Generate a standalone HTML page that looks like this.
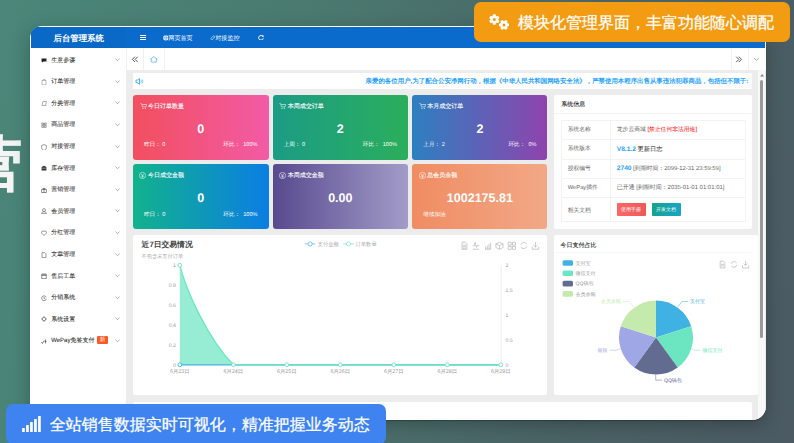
<!DOCTYPE html>
<html><head><meta charset="utf-8">
<style>
*{box-sizing:border-box;margin:0;padding:0}
html,body{width:794px;height:443px;overflow:hidden}
body{position:relative;font-family:"Liberation Sans",sans-serif;text-rendering:geometricPrecision;background:linear-gradient(100deg,#4a8679 0%,#4a7a70 35%,#4a6466 70%,#4b5a63 100%)}
.a{position:absolute}
.t{position:absolute;white-space:nowrap;line-height:1}
#bigc{left:-36.7px;top:135.8px;font-size:58.7px;font-weight:bold;color:#f4f4f4;line-height:1;-webkit-text-stroke:0.7px #f4f4f4}
#win{left:30px;top:26px;width:736px;height:394px;border-radius:12px 12px 14px 12px;background:#fff;overflow:hidden;box-shadow:0 1px 1px rgba(0,0,0,0.25),0 5px 18px rgba(0,0,0,0.26)}
/* all inside win use page coords via wrapper offset */
#pg{left:-30px;top:-26px;width:794px;height:443px}
#hdr{left:31px;top:27px;width:734px;height:21px;background:#0b6bcc}
#hdrl{left:31px;top:27px;width:95px;height:21px;background:#0a68c7}
#side{left:30px;top:48px;width:96.4px;height:372px;background:#fff;box-shadow:1px 0 1px rgba(0,0,0,0.04)}
.mi{position:absolute;left:0;width:96px;height:12px}
.mi .ic{position:absolute;left:10px;top:3px;width:6px;height:6px}
.mi .tx{position:absolute;left:21px;top:2px;font-size:6px;line-height:8px;color:#333;white-space:nowrap}
.mi .cv{position:absolute;left:85px;top:3px;width:4px;height:4px;border-right:0.7px solid #666;border-bottom:0.7px solid #666;transform:rotate(45deg)}
#tabs{left:126px;top:48px;width:640px;height:22px;background:#fff}
#content{left:126px;top:70px;width:640px;height:350px;background:#ececec}
#sbar{left:757.8px;top:70px;width:7px;height:350px;background:#f8f8f8}
#thumb{left:759.9px;top:79.9px;width:3.3px;height:258.4px;background:#9a9a9a;border-radius:1.5px}
.pnl{position:absolute;background:#fff;border-radius:2px}
.card{position:absolute;border-radius:3px;color:#fff}
.card .ttl{position:absolute;left:15px;top:9.2px;font-size:6px;line-height:7px;white-space:nowrap;-webkit-text-stroke:0.1px #fff}
.card .ci{position:absolute;left:7px;top:8px;width:7px;height:7px}
.card .num{position:absolute;left:0;width:100%;text-align:center;top:28px;font-size:12.5px;font-weight:bold;line-height:12px}
.card .fl{position:absolute;left:11px;top:47.7px;font-size:5.6px;line-height:7px;white-space:nowrap}
.card .fr{position:absolute;right:11px;top:47.7px;font-size:5.6px;line-height:7px;white-space:nowrap}
</style></head><body>
<div id="bigc" class="a">营</div>
<div id="win" class="a">
<div id="pg" class="a">
  <div id="hdr" class="a"></div>
  <div id="hdrl" class="a"></div>
  <div class="t" style="left:53.5px;top:33.9px;font-size:8.4px;font-weight:bold;color:#fff">后台管理系统</div>
  <!-- menu icon -->
  <div class="a" style="left:140px;top:35.3px;width:5.6px;height:1px;background:#fff"></div>
  <div class="a" style="left:140px;top:37.3px;width:5.6px;height:1px;background:#fff"></div>
  <div class="a" style="left:140px;top:39.3px;width:5.6px;height:1px;background:#fff"></div>
  <svg class="a" style="left:162.6px;top:35.1px" width="5.6" height="5.6" viewBox="0 0 6 6"><circle cx="3" cy="3" r="2.8" fill="#fff"/><path d="M0.4 3h5.2 M3 0.3c-1.4 1.5-1.4 3.9 0 5.4 M3 0.3c1.4 1.5 1.4 3.9 0 5.4" stroke="#0b68c9" stroke-width="0.45" fill="none"/></svg>
  <div class="t" style="left:168.3px;top:35.5px;font-size:6.1px;color:#fff">网页首页</div>
  <svg class="a" style="left:209.6px;top:35.1px" width="5.6" height="5.6" viewBox="0 0 6 6"><path d="M2.6 3.6l1.2-1.2 M2.2 2.2l0.9-0.9a1.1 1.1 0 0 1 1.6 1.6l-0.9 0.9 M3.8 3.8l-0.9 0.9a1.1 1.1 0 0 1-1.6-1.6l0.9-0.9" stroke="#fff" stroke-width="0.55" fill="none"/></svg>
  <div class="t" style="left:215.2px;top:35.5px;font-size:6.1px;color:#fff">对接监控</div>
  <svg class="a" style="left:257.6px;top:34.9px" width="6" height="5.6" viewBox="0 0 6 5.6"><path d="M4.9 1.6A2.3 2.3 0 1 0 5.2 3.3" fill="none" stroke="#fff" stroke-width="1"/><path d="M3.6 0.6L5.6 0.3L5.4 2.5Z" fill="#fff"/></svg>

  <div id="side" class="a"></div>
<svg class="a" style="left:40.5px;top:57.1px" width="6" height="6" viewBox="0 0 6 6"><path d="M0.5 1.5h5v3h-3l-1.5 1v-1h-0.5z" fill="#222"/></svg>
<div class="t" style="left:51.2px;top:57.5px;font-size:6px;color:#2a2a2a;-webkit-text-stroke:0.06px #2a2a2a">生意参谋</div>
<svg class="a" style="left:114.9px;top:58.1px" width="5" height="3.5" viewBox="0 0 5 3.5"><path d="M0.4 0.6L2.5 2.7L4.6 0.6" fill="none" stroke="#777" stroke-width="0.6"/></svg>
<svg class="a" style="left:40.5px;top:78.7px" width="6" height="6" viewBox="0 0 6 6"><path d="M1 1.5h4v4.5h-4z M2 0.5h2v1" fill="none" stroke="#777" stroke-width="0.5"/></svg>
<div class="t" style="left:51.2px;top:79.1px;font-size:6px;color:#2a2a2a;-webkit-text-stroke:0.06px #2a2a2a">订单管理</div>
<svg class="a" style="left:114.9px;top:79.7px" width="5" height="3.5" viewBox="0 0 5 3.5"><path d="M0.4 0.6L2.5 2.7L4.6 0.6" fill="none" stroke="#777" stroke-width="0.6"/></svg>
<svg class="a" style="left:40.5px;top:100.3px" width="6" height="6" viewBox="0 0 6 6"><path d="M0.5 5.5h5 M1 5l1-3.5h3.5l-1 3.5" fill="none" stroke="#777" stroke-width="0.6"/></svg>
<div class="t" style="left:51.2px;top:100.7px;font-size:6px;color:#2a2a2a;-webkit-text-stroke:0.06px #2a2a2a">分类管理</div>
<svg class="a" style="left:114.9px;top:101.3px" width="5" height="3.5" viewBox="0 0 5 3.5"><path d="M0.4 0.6L2.5 2.7L4.6 0.6" fill="none" stroke="#777" stroke-width="0.6"/></svg>
<svg class="a" style="left:40.5px;top:121.9px" width="6" height="6" viewBox="0 0 6 6"><path d="M0.8 1h1.8v1.8h-1.8z M3.4 1h1.8v1.8h-1.8z M0.8 3.6h1.8v1.8h-1.8z M3.4 3.6h1.8v1.8h-1.8z" fill="none" stroke="#555" stroke-width="0.55"/></svg>
<div class="t" style="left:51.2px;top:122.3px;font-size:6px;color:#2a2a2a;-webkit-text-stroke:0.06px #2a2a2a">商品管理</div>
<svg class="a" style="left:114.9px;top:122.9px" width="5" height="3.5" viewBox="0 0 5 3.5"><path d="M0.4 0.6L2.5 2.7L4.6 0.6" fill="none" stroke="#777" stroke-width="0.6"/></svg>
<svg class="a" style="left:40.5px;top:143.5px" width="6" height="6" viewBox="0 0 6 6"><path d="M3 0.6l2.4 0.9v2c0 1.6-1.2 2.4-2.4 2.9c-1.2-0.5-2.4-1.3-2.4-2.9v-2z" fill="none" stroke="#555" stroke-width="0.6"/></svg>
<div class="t" style="left:51.2px;top:143.9px;font-size:6px;color:#2a2a2a;-webkit-text-stroke:0.06px #2a2a2a">对接管理</div>
<svg class="a" style="left:114.9px;top:144.5px" width="5" height="3.5" viewBox="0 0 5 3.5"><path d="M0.4 0.6L2.5 2.7L4.6 0.6" fill="none" stroke="#777" stroke-width="0.6"/></svg>
<svg class="a" style="left:40.5px;top:165.1px" width="6" height="6" viewBox="0 0 6 6"><path d="M0.6 2l2.4-1.3l2.4 1.3v3.4h-4.8z" fill="#333"/><path d="M1.2 3.2h3.6" stroke="#fff" stroke-width="0.5"/></svg>
<div class="t" style="left:51.2px;top:165.5px;font-size:6px;color:#2a2a2a;-webkit-text-stroke:0.06px #2a2a2a">库存管理</div>
<svg class="a" style="left:114.9px;top:166.1px" width="5" height="3.5" viewBox="0 0 5 3.5"><path d="M0.4 0.6L2.5 2.7L4.6 0.6" fill="none" stroke="#777" stroke-width="0.6"/></svg>
<svg class="a" style="left:40.5px;top:186.7px" width="6" height="6" viewBox="0 0 6 6"><path d="M0.6 2.5h4.8v3h-4.8z M3 1v4.5 M1.5 1.5c0.8-1 1.5 0 1.5 1 M4.5 1.5c-0.8-1-1.5 0-1.5 1" fill="none" stroke="#444" stroke-width="0.6"/></svg>
<div class="t" style="left:51.2px;top:187.1px;font-size:6px;color:#2a2a2a;-webkit-text-stroke:0.06px #2a2a2a">营销管理</div>
<svg class="a" style="left:114.9px;top:187.7px" width="5" height="3.5" viewBox="0 0 5 3.5"><path d="M0.4 0.6L2.5 2.7L4.6 0.6" fill="none" stroke="#777" stroke-width="0.6"/></svg>
<svg class="a" style="left:40.5px;top:208.3px" width="6" height="6" viewBox="0 0 6 6"><path d="M3 0.6a1.5 1.5 0 1 1 0 3a1.5 1.5 0 1 1 0-3 M0.6 5.6c0.3-1.3 1.2-2 2.4-2s2.1 0.7 2.4 2z" fill="none" stroke="#555" stroke-width="0.6"/></svg>
<div class="t" style="left:51.2px;top:208.7px;font-size:6px;color:#2a2a2a;-webkit-text-stroke:0.06px #2a2a2a">会员管理</div>
<svg class="a" style="left:114.9px;top:209.3px" width="5" height="3.5" viewBox="0 0 5 3.5"><path d="M0.4 0.6L2.5 2.7L4.6 0.6" fill="none" stroke="#777" stroke-width="0.6"/></svg>
<svg class="a" style="left:40.5px;top:229.9px" width="6" height="6" viewBox="0 0 6 6"><path d="M3 5.5l-2.3-2.3a1.3 1.3 0 0 1 2.3-1.6a1.3 1.3 0 0 1 2.3 1.6z" fill="none" stroke="#555" stroke-width="0.6"/></svg>
<div class="t" style="left:51.2px;top:230.3px;font-size:6px;color:#2a2a2a;-webkit-text-stroke:0.06px #2a2a2a">分红管理</div>
<svg class="a" style="left:114.9px;top:230.9px" width="5" height="3.5" viewBox="0 0 5 3.5"><path d="M0.4 0.6L2.5 2.7L4.6 0.6" fill="none" stroke="#777" stroke-width="0.6"/></svg>
<svg class="a" style="left:40.5px;top:251.5px" width="6" height="6" viewBox="0 0 6 6"><path d="M1 0.6h2.8l1.2 1.2v3.8h-4z" fill="none" stroke="#555" stroke-width="0.6"/></svg>
<div class="t" style="left:51.2px;top:251.9px;font-size:6px;color:#2a2a2a;-webkit-text-stroke:0.06px #2a2a2a">文章管理</div>
<svg class="a" style="left:114.9px;top:252.5px" width="5" height="3.5" viewBox="0 0 5 3.5"><path d="M0.4 0.6L2.5 2.7L4.6 0.6" fill="none" stroke="#777" stroke-width="0.6"/></svg>
<svg class="a" style="left:40.5px;top:273.1px" width="6" height="6" viewBox="0 0 6 6"><path d="M0.7 1.2h4.6v4.4h-4.6z M0.7 2.5h4.6 M2 0.5v1.4 M4 0.5v1.4" fill="none" stroke="#444" stroke-width="0.6"/></svg>
<div class="t" style="left:51.2px;top:273.5px;font-size:6px;color:#2a2a2a;-webkit-text-stroke:0.06px #2a2a2a">售后工单</div>
<svg class="a" style="left:114.9px;top:274.1px" width="5" height="3.5" viewBox="0 0 5 3.5"><path d="M0.4 0.6L2.5 2.7L4.6 0.6" fill="none" stroke="#777" stroke-width="0.6"/></svg>
<svg class="a" style="left:40.5px;top:294.7px" width="6" height="6" viewBox="0 0 6 6"><path d="M5.2 2.2a2.4 2.4 0 1 0 0.2 1.6 M3 2v1.4h1.2" fill="none" stroke="#444" stroke-width="0.6"/></svg>
<div class="t" style="left:51.2px;top:295.1px;font-size:6px;color:#2a2a2a;-webkit-text-stroke:0.06px #2a2a2a">分销系统</div>
<svg class="a" style="left:114.9px;top:295.7px" width="5" height="3.5" viewBox="0 0 5 3.5"><path d="M0.4 0.6L2.5 2.7L4.6 0.6" fill="none" stroke="#777" stroke-width="0.6"/></svg>
<svg class="a" style="left:40.5px;top:316.3px" width="6" height="6" viewBox="0 0 6 6"><path d="M3 1.2a1.8 1.8 0 1 1 0 3.6a1.8 1.8 0 1 1 0-3.6z M3 0.3v1 M3 4.8v1 M0.3 3h1 M4.8 3h1" fill="none" stroke="#444" stroke-width="0.6"/></svg>
<div class="t" style="left:51.2px;top:316.7px;font-size:6px;color:#2a2a2a;-webkit-text-stroke:0.06px #2a2a2a">系统设置</div>
<svg class="a" style="left:114.9px;top:317.3px" width="5" height="3.5" viewBox="0 0 5 3.5"><path d="M0.4 0.6L2.5 2.7L4.6 0.6" fill="none" stroke="#777" stroke-width="0.6"/></svg>
<svg class="a" style="left:40.5px;top:337.9px" width="6" height="6" viewBox="0 0 6 6"><path d="M0.5 4l1 1.5l1.5-3 M3.5 3.5h2 M4.5 1.5v4" fill="none" stroke="#333" stroke-width="0.6"/></svg>
<div class="t" style="left:51.2px;top:338.3px;font-size:6px;color:#2a2a2a;-webkit-text-stroke:0.06px #2a2a2a">WePay免签支付</div><div class="a" style="left:97.1px;top:336.1px;width:10.8px;height:7.5px;background:#ff5722;border-radius:1.2px"></div><div class="t" style="left:99.7px;top:338.1px;font-size:5.6px;color:#fff">新</div>
<svg class="a" style="left:114.9px;top:338.9px" width="5" height="3.5" viewBox="0 0 5 3.5"><path d="M0.4 0.6L2.5 2.7L4.6 0.6" fill="none" stroke="#777" stroke-width="0.6"/></svg>

  <div id="tabs" class="a"></div>
  <div class="a" style="left:126px;top:48px;width:0.8px;height:22px;background:#f0f0f0"></div>
  <div class="a" style="left:143.2px;top:48px;width:0.8px;height:22px;background:#f0f0f0"></div>
  <div class="a" style="left:163.5px;top:48px;width:1px;height:22px;background:#f0f0f0"></div>
  <div class="a" style="left:730.8px;top:48px;width:1px;height:22px;background:#f0f0f0"></div>
  <div class="a" style="left:747.8px;top:48px;width:1px;height:22px;background:#f0f0f0"></div>
  <svg class="a" style="left:131px;top:55.5px" width="8" height="7" viewBox="131 55.5 8 7"><path d="M135 56.2L132.3 58.9L135 61.5 M137.7 56.2L135.1 58.9L137.7 61.5" fill="none" stroke="#333" stroke-width="0.8"/></svg>
  <svg class="a" style="left:149px;top:55.5px" width="10" height="7" viewBox="149 55.5 10 7"><path d="M150 58.8L153.8 56.2L157.6 58.8 M151.3 58.2V61.6H156.4V58.2" fill="none" stroke="#4fb3e8" stroke-width="0.7"/></svg>
  <svg class="a" style="left:735px;top:55.5px" width="8" height="7" viewBox="735 55.5 8 7"><path d="M736.2 56.2L738.9 58.9L736.2 61.6 M738.8 56.2L741.5 58.9L738.8 61.6" fill="none" stroke="#333" stroke-width="0.8"/></svg>
  <svg class="a" style="left:753px;top:57px" width="7" height="4.5" viewBox="753 57 7 4.5"><path d="M754 58L756.4 60.4L758.8 58" fill="none" stroke="#666" stroke-width="0.6"/></svg>

  <div id="content" class="a"></div>
  <div id="sbar" class="a"></div>
  <div id="thumb" class="a"></div>
  <svg class="a" style="left:758.5px;top:73px" width="6" height="4" viewBox="758.5 73 6 4"><path d="M759.6 76.6L761.6 74L763.6 76.6Z" fill="#888"/></svg>

  <!-- notice -->
  <div class="pnl" style="left:133px;top:73.2px;width:619px;height:15.8px;border-radius:1px"></div>
  <svg class="a" style="left:135px;top:77.5px" width="9" height="7.5" viewBox="135 77.5 9 7.5"><path d="M136 79.6h1.3l2.2-1.6v5.8l-2.2-1.6h-1.3z" fill="none" stroke="#1e9fff" stroke-width="0.8"/><path d="M140.8 79.6c0.7 0.7 0.7 1.9 0 2.6 M141.9 78.8c1.2 1.2 1.2 3.2 0 4.4" fill="none" stroke="#1e9fff" stroke-width="0.6"/></svg>
  <div class="t" style="left:365.6px;top:78.8px;font-size:6.43px;font-weight:bold;color:#1e9fff">亲爱的各位用户,为了配合公安净网行动，根据《中华人民共和国网络安全法》，严禁使用本程序出售从事违法犯罪商品，包括但不限于:</div>

  <!-- cards -->
  <div class="card" style="left:133px;top:94.8px;width:135.5px;height:65px;background:linear-gradient(90deg,#f24f5e,#f25ba6)">
    <svg class="ci" viewBox="0 0 7 7" style="left:6.6px;top:8.3px;width:7px;height:6.5px"><path d="M0.2 0.6h1.2l1 3.6h3.8l0.7-2.6h-4.9" fill="none" stroke="#fff" stroke-width="0.6"/><circle cx="2.9" cy="5.6" r="0.6" fill="#fff"/><circle cx="5.5" cy="5.6" r="0.6" fill="#fff"/></svg><div class="ttl">今日订单数量</div><div class="num">0</div><div class="fl">昨日：&nbsp;0</div><div class="fr">环比：&nbsp;&nbsp;100%</div>
  </div>
  <div class="card" style="left:272.7px;top:94.8px;width:135.3px;height:65px;background:linear-gradient(90deg,#1b9c85,#2bae5c)">
    <svg class="ci" viewBox="0 0 7 7" style="left:6.6px;top:8.3px;width:7px;height:6.5px"><path d="M0.2 0.6h1.2l1 3.6h3.8l0.7-2.6h-4.9" fill="none" stroke="#fff" stroke-width="0.6"/><circle cx="2.9" cy="5.6" r="0.6" fill="#fff"/><circle cx="5.5" cy="5.6" r="0.6" fill="#fff"/></svg><div class="ttl">本周成交订单</div><div class="num">2</div><div class="fl">上周：&nbsp;0</div><div class="fr">环比：&nbsp;&nbsp;100%</div>
  </div>
  <div class="card" style="left:412.3px;top:94.8px;width:135.2px;height:65px;background:linear-gradient(90deg,#2d80c0,#8e44ad)">
    <svg class="ci" viewBox="0 0 7 7" style="left:6.6px;top:8.3px;width:7px;height:6.5px"><path d="M0.2 0.6h1.2l1 3.6h3.8l0.7-2.6h-4.9" fill="none" stroke="#fff" stroke-width="0.6"/><circle cx="2.9" cy="5.6" r="0.6" fill="#fff"/><circle cx="5.5" cy="5.6" r="0.6" fill="#fff"/></svg><div class="ttl">本月成交订单</div><div class="num">2</div><div class="fl">上月：&nbsp;2</div><div class="fr">环比：&nbsp;&nbsp;0%</div>
  </div>
  <div class="card" style="left:133px;top:164px;width:135.5px;height:64.5px;background:linear-gradient(90deg,#12b28c,#0b7ee3)">
    <svg class="ci" viewBox="0 0 7 7" style="left:6.3px;top:7.7px;width:7px;height:7px"><circle cx="3.5" cy="3.5" r="3.1" fill="none" stroke="#fff" stroke-width="0.55"/><path d="M2.2 1.9l1.3 1.7l1.3-1.7 M3.5 3.6v2 M2.4 3.9h2.2 M2.4 4.8h2.2" fill="none" stroke="#fff" stroke-width="0.5"/></svg><div class="ttl">今日成交金额</div><div class="num">0</div><div class="fl">昨日：&nbsp;0</div><div class="fr">环比：&nbsp;&nbsp;100%</div>
  </div>
  <div class="card" style="left:272.7px;top:164px;width:135.3px;height:64.5px;background:linear-gradient(90deg,#584a8e,#a29cc8)">
    <svg class="ci" viewBox="0 0 7 7" style="left:6.3px;top:7.7px;width:7px;height:7px"><circle cx="3.5" cy="3.5" r="3.1" fill="none" stroke="#fff" stroke-width="0.55"/><path d="M2.2 1.9l1.3 1.7l1.3-1.7 M3.5 3.6v2 M2.4 3.9h2.2 M2.4 4.8h2.2" fill="none" stroke="#fff" stroke-width="0.5"/></svg><div class="ttl">本周成交金额</div><div class="num">0.00</div>
  </div>
  <div class="card" style="left:412.3px;top:164px;width:135.2px;height:64.5px;background:linear-gradient(90deg,#f08c62,#f2a886)">
    <svg class="ci" viewBox="0 0 7 7" style="left:6.3px;top:7.7px;width:7px;height:7px"><circle cx="3.5" cy="3.5" r="3.1" fill="none" stroke="#fff" stroke-width="0.55"/><path d="M2.2 1.9l1.3 1.7l1.3-1.7 M3.5 3.6v2 M2.4 3.9h2.2 M2.4 4.8h2.2" fill="none" stroke="#fff" stroke-width="0.5"/></svg><div class="ttl">总会员余额</div><div class="num">1002175.81</div><div class="fl">继续加油</div>
  </div>

  <!-- sys info -->
  <div class="pnl" style="left:554px;top:94.8px;width:198px;height:133.8px"></div>
  <div class="t" style="left:561.2px;top:101.8px;font-size:6px;color:#222;-webkit-text-stroke:0.1px #222">系统信息</div>
  <div class="a" style="left:554px;top:113.3px;width:198px;height:0.6px;background:#f3f3f3"></div>
  <div class="a" style="left:561.2px;top:120.4px;width:184.5px;height:102px;border:0.8px solid #f2f2f2"></div>
  <div class="a" style="left:609.5px;top:120.4px;width:0.6px;height:102px;background:#f3f3f3"></div>
  <div class="a" style="left:561.2px;top:139.1px;width:184.5px;height:0.6px;background:#f3f3f3"></div>
  <div class="a" style="left:561.2px;top:158.6px;width:184.5px;height:0.6px;background:#f3f3f3"></div>
  <div class="a" style="left:561.2px;top:177.8px;width:184.5px;height:0.6px;background:#f3f3f3"></div>
  <div class="a" style="left:561.2px;top:197px;width:184.5px;height:0.8px;background:#f2f2f2"></div>
  <div class="t" style="left:567.7px;top:127.7px;font-size:5.8px;color:#666">系统名称</div>
  <div class="t" style="left:567.7px;top:147.2px;font-size:5.8px;color:#666">系统版本</div>
  <div class="t" style="left:567.7px;top:166.6px;font-size:5.8px;color:#666">授权编号</div>
  <div class="t" style="left:567.7px;top:186.2px;font-size:5.8px;color:#666">WePay插件</div>
  <div class="t" style="left:567.7px;top:208.5px;font-size:5.8px;color:#666">相关文档</div>
  <div class="t" style="left:616.8px;top:127.7px;font-size:5.8px;color:#666">龙步云商城 <span style="color:#f00">[禁止任何非法用途]</span></div>
  <div class="t" style="left:616.8px;top:146.9px;font-size:6.2px;color:#222"><b style="color:#1e9fff;font-size:6.6px">V8.1.2</b> 更新日志</div>
  <div class="t" style="left:616.8px;top:166.4px;font-size:5.9px;color:#666"><b style="color:#1e9fff;font-size:6.6px">2740</b> [到期时间：2099-12-31 23:59:59]</div>
  <div class="t" style="left:616.8px;top:186.2px;font-size:5.95px;color:#666">已开通 [到期时间：2035-01-01 01:01:01]</div>
  <div class="a" style="left:616.8px;top:203.1px;width:29.2px;height:13.2px;background:linear-gradient(90deg,#f96767,#ee5a5a);border-radius:1px"></div>
  <div class="t" style="left:621px;top:208.3px;font-size:5px;color:#fff">使用手册</div>
  <div class="a" style="left:651.6px;top:203.1px;width:29.4px;height:13.2px;background:linear-gradient(90deg,#16a38c,#17a5c7);border-radius:1px"></div>
  <div class="t" style="left:656px;top:208.3px;font-size:5px;color:#fff">开发文档</div>


  <!-- chart panel -->
  <div class="pnl" style="left:133px;top:235.3px;width:414px;height:159.5px"></div>
<svg class="a" style="left:133px;top:235.3px" width="414" height="159.5" viewBox="133 235.3 414 159.5" font-family="Liberation Sans, sans-serif">
<path d="M179.8 265.5 C186.2 291.4 208.7 340.2 233.3 365.1 L179.8 365.1 Z" fill="#6be6c1" fill-opacity="0.7"/>
<path d="M501.2 265.5 V365.1" stroke="#e3e3e3" stroke-width="0.6"/>
<path d="M179.8 365.1 H500.8" stroke="#3fb1e3" stroke-width="1.3" fill="none"/>
<path d="M179.8 265.5 C186.2 291.4 208.7 340.2 233.3 365.1 H500.8" stroke="#6be6c1" stroke-width="1.3" fill="none"/>
<circle cx="179.8" cy="265.5" r="1.9" fill="#fff" stroke="#6be6c1" stroke-width="0.9"/>
<circle cx="233.3" cy="365.1" r="1.9" fill="#fff" stroke="#6be6c1" stroke-width="0.9"/>
<circle cx="286.8" cy="365.1" r="1.9" fill="#fff" stroke="#6be6c1" stroke-width="0.9"/>
<circle cx="340.3" cy="365.1" r="1.9" fill="#fff" stroke="#6be6c1" stroke-width="0.9"/>
<circle cx="393.8" cy="365.1" r="1.9" fill="#fff" stroke="#6be6c1" stroke-width="0.9"/>
<circle cx="447.3" cy="365.1" r="1.9" fill="#fff" stroke="#6be6c1" stroke-width="0.9"/>
<circle cx="500.8" cy="365.1" r="1.9" fill="#fff" stroke="#6be6c1" stroke-width="0.9"/>
<circle cx="179.8" cy="365.1" r="1.9" fill="#fff" stroke="#3fb1e3" stroke-width="0.9"/>
<text x="176" y="267.3" font-size="5.2" fill="#999" text-anchor="end">1</text>
<text x="176" y="287.2" font-size="5.2" fill="#999" text-anchor="end">0.8</text>
<text x="176" y="307.1" font-size="5.2" fill="#999" text-anchor="end">0.6</text>
<text x="176" y="327.1" font-size="5.2" fill="#999" text-anchor="end">0.4</text>
<text x="176" y="347.0" font-size="5.2" fill="#999" text-anchor="end">0.2</text>
<text x="176" y="366.9" font-size="5.2" fill="#999" text-anchor="end">0</text>
<text x="505.5" y="267.3" font-size="5.2" fill="#999">2</text>
<text x="505.5" y="292.2" font-size="5.2" fill="#999">1.5</text>
<text x="505.5" y="317.1" font-size="5.2" fill="#999">1</text>
<text x="505.5" y="342.0" font-size="5.2" fill="#999">0.5</text>
<text x="505.5" y="366.9" font-size="5.2" fill="#999">0</text>
<text x="179.8" y="372.9" font-size="5.4" fill="#999" text-anchor="middle">6月23日</text>
<text x="233.3" y="372.9" font-size="5.4" fill="#999" text-anchor="middle">6月24日</text>
<text x="286.8" y="372.9" font-size="5.4" fill="#999" text-anchor="middle">6月25日</text>
<text x="340.3" y="372.9" font-size="5.4" fill="#999" text-anchor="middle">6月26日</text>
<text x="393.8" y="372.9" font-size="5.4" fill="#999" text-anchor="middle">6月27日</text>
<text x="447.3" y="372.9" font-size="5.4" fill="#999" text-anchor="middle">6月28日</text>
<text x="500.8" y="372.9" font-size="5.4" fill="#999" text-anchor="middle">6月29日</text>
<text x="141.6" y="247.6" font-size="7.8" font-weight="bold" fill="#444">近7日交易情况</text>
<text x="141.6" y="258" font-size="5.2" fill="#aaa">不包含未支付订单</text>
<path d="M304.8 244.2 H315.4" stroke="#3fb1e3" stroke-width="0.65"/><circle cx="310.1" cy="244.2" r="2.1" fill="#fff" stroke="#3fb1e3" stroke-width="0.65"/>
<text x="317.7" y="246" font-size="5.3" fill="#aaa">支付金额</text>
<path d="M343.2 244.2 H353.8" stroke="#6be6c1" stroke-width="0.65"/><circle cx="348.5" cy="244.2" r="2.1" fill="#fff" stroke="#6be6c1" stroke-width="0.65"/>
<text x="355.5" y="246" font-size="5.3" fill="#aaa">订单数量</text>
<g stroke="#aaa" stroke-width="0.6" fill="none"><path d="M462 242.5h3.5l1.4 1.4v5.8h-4.9z M462.8 245.5h3.4 M462.8 247h3.4 M462.8 248.5h3.4"/><path d="M472.7 246.2h1.5l1-3.5l1.2 5l0.9-2h2 M472.7 249.5h6.3"/><path d="M485 249.5h6 M485.6 249.3v-2.5 M487.3 249.3v-3.5 M489 249.3v-5 M490.6 249.3v-6.5"/><path d="M499.5 242.6l3.6 1.6v3.6l-3.6 1.8l-3.6-1.8v-3.6z M495.9 244.2l3.6 1.8l3.6-1.8 M499.5 246v3.6"/><path d="M508.2 242.5h3v3h-3z M512.5 242.5h3v3h-3z M508.2 246.7h3v3h-3z M512.5 246.7h3v3h-3z"/><path d="M526.8 244.2a3.4 3.4 0 0 0-6 0.8 M520.8 247.4a3.4 3.4 0 0 0 6-0.8"/><path d="M535.5 242.3v5 M533.4 245.3l2.1 2l2.1-2 M532.3 247v2.5h6.4v-2.5"/></g>
</svg>
  <!-- pie panel -->
  <div class="pnl" style="left:554.4px;top:235.2px;width:203.4px;height:160px"></div>
<svg class="a" style="left:554.4px;top:235.2px" width="197.6" height="160" viewBox="554.4 235.2 197.6 160" font-family="Liberation Sans, sans-serif">
<path transform="translate(0.3 0.4)" d="M656.1 337.4 L656.10 300.40 A37 37 0 0 1 691.29 325.97 Z" fill="#3fb1e3"/>
<path transform="translate(0.3 0.4)" d="M656.1 337.4 L691.29 325.97 A37 37 0 0 1 677.85 367.33 Z" fill="#6be6c1"/>
<path transform="translate(0.3 0.4)" d="M656.1 337.4 L677.85 367.33 A37 37 0 0 1 634.35 367.33 Z" fill="#626c91"/>
<path transform="translate(0.3 0.4)" d="M656.1 337.4 L634.35 367.33 A37 37 0 0 1 620.91 325.97 Z" fill="#a0a7e6"/>
<path transform="translate(0.3 0.4)" d="M656.1 337.4 L620.91 325.97 A37 37 0 0 1 656.10 300.40 Z" fill="#c4ebad"/>
<path d="M678.02 307.22 L682.5 301.7 H688.5" fill="none" stroke="#3fb1e3" stroke-width="0.5"/>
<text x="690.5" y="303.5" font-size="5" fill="#3fb1e3" text-anchor="start">支付宝</text>
<path d="M691.57 348.93 L696 350.5 H701" fill="none" stroke="#6be6c1" stroke-width="0.5"/>
<text x="702.9" y="352.3" font-size="5" fill="#6be6c1" text-anchor="start">微信支付</text>
<path d="M656.10 374.70 L656.1 380.3 H662.5" fill="none" stroke="#626c91" stroke-width="0.5"/>
<text x="664.5" y="382.1" font-size="5" fill="#626c91" text-anchor="start">QQ钱包</text>
<path d="M620.63 348.93 L616.2 350.5 H610" fill="none" stroke="#a0a7e6" stroke-width="0.5"/>
<text x="608" y="352.3" font-size="5" fill="#a0a7e6" text-anchor="end">银联</text>
<path d="M634.18 307.22 L629.7 301.7 H623.2" fill="none" stroke="#c4ebad" stroke-width="0.5"/>
<text x="621.2" y="303.5" font-size="5" fill="#c4ebad" text-anchor="end">会员余额</text>
<text x="561" y="247.2" font-size="6" fill="#222" stroke="#222" stroke-width="0.1">今日支付占比</text>
<path d="M554.4 252.9H752" stroke="#f2f2f2" stroke-width="0.6"/>
<rect x="563" y="260.35" width="10.4" height="5.7" rx="1.5" fill="#3fb1e3"/>
<text x="576" y="265.00" font-size="5" fill="#999">支付宝</text>
<rect x="563" y="270.62" width="10.4" height="5.7" rx="1.5" fill="#6be6c1"/>
<text x="576" y="275.27" font-size="5" fill="#999">微信支付</text>
<rect x="563" y="280.89" width="10.4" height="5.7" rx="1.5" fill="#626c91"/>
<text x="576" y="285.54" font-size="5" fill="#999">QQ钱包</text>
<rect x="563" y="291.16" width="10.4" height="5.7" rx="1.5" fill="#c4ebad"/>
<text x="576" y="295.81" font-size="5" fill="#999">会员余额</text>
<g stroke="#aaa" stroke-width="0.6" fill="none"><path d="M720.6 261.4h3.2l1.5 1.5v5.2h-4.7z M721.5 264.5h2.8 M721.5 266h2.8"/><path d="M737.2 263.2a3.1 3.1 0 0 0-5.6 0.8 M731.6 266a3.1 3.1 0 0 0 5.6-0.8"/><path d="M746 261v4.6 M744 263.8l2 1.9l2-1.9 M742.9 265.5v2.6h6.2v-2.6"/></g>
</svg>
  <!-- bottom panel -->
  <div class="pnl" style="left:133px;top:401.6px;width:619px;height:30px"></div>
</div>
</div>

<!-- banners -->
<div class="a" style="left:474px;top:1.9px;width:316px;height:39.9px;background:#f39c12;border-radius:7px"></div>
<svg class="a" style="left:487px;top:12px" width="25" height="20" viewBox="487 12 25 20"><path d="M492.56 15.90 L493.11 14.34 L495.49 14.34 L496.04 15.90 L496.55 16.19 L498.18 15.89 L499.37 17.95 L498.29 19.21 L498.29 19.79 L499.37 21.05 L498.18 23.11 L496.55 22.81 L496.04 23.10 L495.49 24.66 L493.11 24.66 L492.56 23.10 L492.05 22.81 L490.42 23.11 L489.23 21.05 L490.31 19.79 L490.31 19.21 L489.23 17.95 L490.42 15.89 L492.05 16.19Z M495.90 19.50 A1.6 1.6 0 1 0 492.70 19.50 A1.6 1.6 0 1 0 495.90 19.50Z M504.32 21.01 L505.55 19.94 L507.52 21.08 L507.21 22.68 L507.52 23.23 L509.07 23.76 L509.07 26.04 L507.52 26.57 L507.21 27.12 L507.52 28.72 L505.55 29.86 L504.32 28.79 L503.68 28.79 L502.45 29.86 L500.48 28.72 L500.79 27.12 L500.48 26.57 L498.93 26.04 L498.93 23.76 L500.48 23.23 L500.79 22.68 L500.48 21.08 L502.45 19.94 L503.68 21.01Z M505.50 24.90 A1.5 1.5 0 1 0 502.50 24.90 A1.5 1.5 0 1 0 505.50 24.90Z" fill="#fff" fill-rule="evenodd"/></svg>
<div class="t" style="left:518px;top:15.5px;font-size:16px;color:#fff;-webkit-text-stroke:0.25px #fff">模块化管理界面，丰富功能随心调配</div>
<div class="a" style="left:6px;top:403.9px;width:380px;height:39.9px;background:#3e83f0;border-radius:7px"></div>
<svg class="a" style="left:20px;top:414px" width="22" height="20" viewBox="20 414 22 20"><rect x="22.1" y="427.9" width="2.7" height="4.1" fill="#fff" rx="0.3"/><rect x="26.1" y="425" width="2.7" height="7.0" fill="#fff" rx="0.3"/><rect x="30.1" y="422" width="2.7" height="10.0" fill="#fff" rx="0.3"/><rect x="34.1" y="418.9" width="2.7" height="13.1" fill="#fff" rx="0.3"/><rect x="38.1" y="415.9" width="2.7" height="16.1" fill="#fff" rx="0.3"/></svg>
<div class="t" style="left:49.7px;top:417.6px;font-size:16px;color:#fff;-webkit-text-stroke:0.25px #fff">全站销售数据实时可视化，精准把握业务动态</div>
</body></html>
